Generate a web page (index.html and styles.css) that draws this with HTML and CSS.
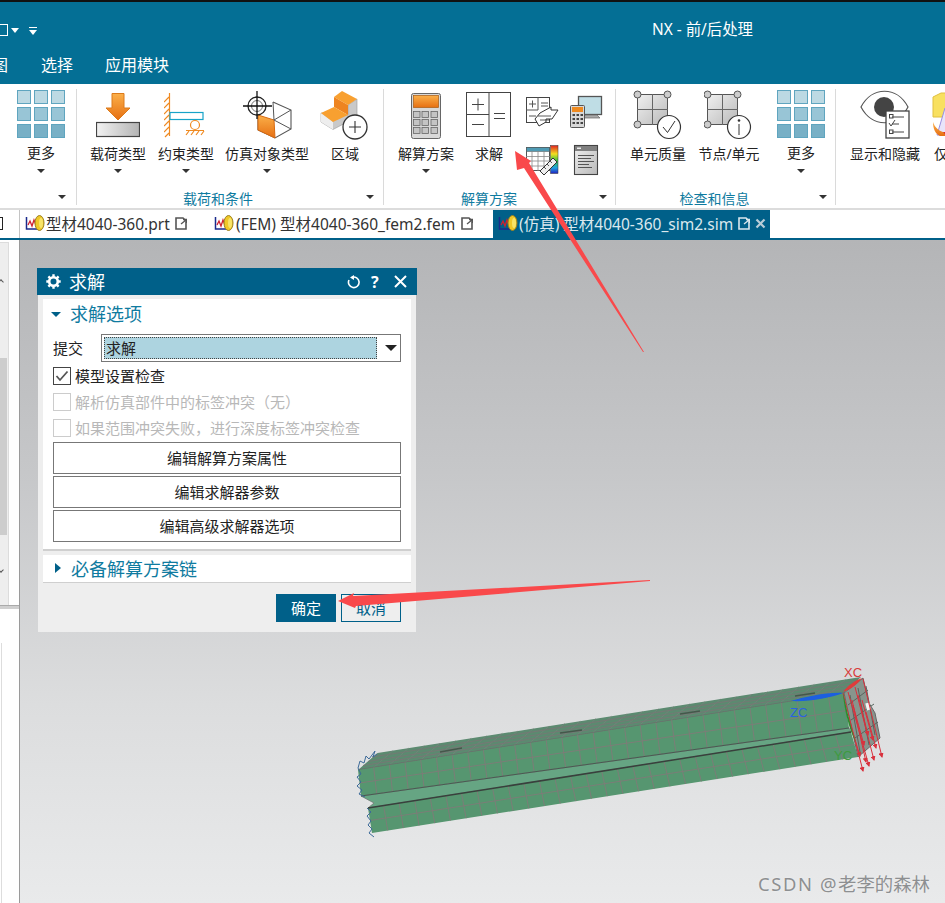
FILE: index.html
```html
<!DOCTYPE html>
<html lang="zh-CN">
<head>
<meta charset="utf-8">
<title>NX - 前/后处理</title>
<link rel="stylesheet" href="styles.css">
</head>
<body>
<svg class="defs" width="0" height="0">
  <defs>
    <linearGradient id="org" x1="0" y1="0" x2="0" y2="1"><stop offset="0" stop-color="#fbb04a"/><stop offset="1" stop-color="#e66f12"/></linearGradient>
    <linearGradient id="gry" x1="0" y1="0" x2="1" y2="0"><stop offset="0" stop-color="#f2f2f2"/><stop offset="1" stop-color="#b4b4b4"/></linearGradient>
    <linearGradient id="gry2" x1="0" y1="0" x2="1" y2="1"><stop offset="0" stop-color="#f0f0f0"/><stop offset="1" stop-color="#b9b9b9"/></linearGradient>
    <linearGradient id="rainbow" x1="0" y1="0" x2="0" y2="1"><stop offset="0" stop-color="#e02020"/><stop offset=".3" stop-color="#f4e020"/><stop offset=".55" stop-color="#30c040"/><stop offset=".8" stop-color="#20a0e0"/><stop offset="1" stop-color="#2020c0"/></linearGradient>
    <symbol id="i-more" viewBox="0 0 48 48">
      <g stroke="#5fa5bf" stroke-width="1">
        <g fill="#bcd9e3"><rect x=".5" y=".5" width="13" height="13"/><rect x="17.5" y=".5" width="13" height="13"/><rect x="34.5" y=".5" width="13" height="13"/></g>
        <g fill="#98c5d6"><rect x=".5" y="17.5" width="13" height="13"/><rect x="17.5" y="17.5" width="13" height="13"/><rect x="34.5" y="17.5" width="13" height="13"/></g>
        <g fill="#78b0c6"><rect x=".5" y="34.5" width="13" height="13"/><rect x="17.5" y="34.5" width="13" height="13"/><rect x="34.5" y="34.5" width="13" height="13"/></g>
      </g>
    </symbol>
    <symbol id="i-tab" viewBox="0 0 20 18">
      <path d="M1.500 3V15H13" fill="none" stroke="#1a2a8c" stroke-width="1.500"/>
      <path d="M3 11L5 7L7 12L9 6L11 11" fill="none" stroke="#d02030" stroke-width="1.300"/>
      <ellipse cx="14.500" cy="9" rx="4.500" ry="7.500" fill="#f0c828" stroke="#9a8020"/>
      <ellipse cx="16" cy="9" rx="2" ry="5" fill="#f8e468"/>
    </symbol>
    <symbol id="i-doc" viewBox="0 0 12 13">
      <path d="M1 1H8L11 4V12H1Z" fill="none" stroke="currentColor" stroke-width="1.600"/>
      <path d="M6 7L11 3M8 2.500H11.500V6" fill="none" stroke="currentColor" stroke-width="1.300"/>
    </symbol>
  </defs>
</svg>

<header class="titlebar">
  <div class="qat">
    <span class="qat-box"></span>
    <span class="qat-caret"></span>
    <span class="qat-more"></span>
  </div>
  <div class="apptitle">NX - 前/后处理</div>
</header>
<nav class="menubar">
  <span>图</span><span>选择</span><span>应用模块</span>
</nav>

<section class="ribbon">
  <div class="group g1">
    <div class="items">
      <div class="item w-more">
        <svg class="ic" width="48" height="48"><use href="#i-more"/></svg>
        <span class="lb up1">更多</span><i class="caret"></i>
      </div>
    </div>
    <i class="caret corner"></i>
  </div>

  <div class="group g2">
    <div class="items">
      <div class="item w68">
        <svg class="ic0" width="44" height="54" viewBox="96 88 44 54">
          <path d="M112 93.500H124V108H130L118 120L106 108H112Z" fill="url(#org)" stroke="#dc7a1a"/>
          <rect x="96.500" y="122.500" width="43" height="14" fill="url(#gry)" stroke="#444" stroke-width="1.200"/>
        </svg>
        <span class="lb">载荷类型</span><i class="caret"></i>
      </div>
      <div class="item w68">
        <svg class="ic0" width="44" height="54" viewBox="164 88 44 54">
          <path d="M169.500 93V136M169 97L164 102M169 103L164 108M169 109L164 114M169 115L164 120M169 121L164 126M169 127L164 132M169 133L165 137" fill="none" stroke="#ef8a22" stroke-width="1.200"/>
          <rect x="170" y="112.500" width="33" height="7" fill="#fff" stroke="#17a3c8" stroke-width="1.200"/>
          <circle cx="195" cy="125" r="4.500" fill="#fff" stroke="#ef8a22" stroke-width="1.200"/>
          <path d="M186 130.500H204M189 131L186 135M194 131L191 135M199 131L196 135M204 131L201 135" fill="none" stroke="#ef8a22" stroke-width="1.200"/>
        </svg>
        <span class="lb">约束类型</span><i class="caret"></i>
      </div>
      <div class="item w94">
        <svg class="ic0" width="52" height="54" viewBox="241 88 52 54">
          <path d="M273 102L291 110V129L275 138L258 130V115" fill="#fff" stroke="#555" stroke-width="1.100"/>
          <path d="M258 115L274 120L275 138L258 130Z" fill="url(#org)" stroke="#d86a10"/>
          <path d="M273 102L274 120L291 110M274 120L291 129" fill="none" stroke="#555"/>
          <circle cx="257" cy="106" r="9" fill="#fff" fill-opacity=".7" stroke="#222" stroke-width="1.300"/>
          <circle cx="257" cy="106" r="5.500" fill="none" stroke="#777"/>
          <path d="M243 106H272M257 91V119" stroke="#111" stroke-width="1.300"/>
        </svg>
        <span class="lb">仿真对象类型</span><i class="caret"></i>
      </div>
      <div class="item w62">
        <svg class="ic0" width="50" height="54" viewBox="320 88 50 54">
          <path d="M321 113V122L333 129.500L357 117V99L348 105V115Z" fill="#c9c9c9" stroke="#999" stroke-width=".6"/>
          <path d="M321 122L333 129.500V122L321 113Z" fill="#eee"/>
          <path d="M334 97L342 91L357 99L348 105Z" fill="#f8a030"/>
          <path d="M334 97L348 105V115L334 107Z" fill="#ee8420"/>
          <path d="M321 113L334 107L348 115L333 122Z" fill="#f8a030"/>
          <circle cx="355" cy="127" r="12" fill="#fff" stroke="#333" stroke-width="1.300"/>
          <path d="M349 127H361M355 121V133" stroke="#333" stroke-width="1.100"/>
        </svg>
        <span class="lb">区域</span>
      </div>
    </div>
    <span class="glabel">载荷和条件</span>
    <i class="caret corner"></i>
  </div>

  <div class="group g3">
    <div class="items">
      <div class="item w68">
        <svg class="ic0" width="32" height="54" viewBox="410 88 32 54">
          <rect x="411.500" y="93.500" width="29" height="45" rx="2" fill="#d8d8d8" stroke="#666"/>
          <rect x="413.500" y="95.500" width="25" height="12" fill="url(#org)" stroke="#a85a10" stroke-width=".7"/>
          <g fill="#c4c4c4" stroke="#666" stroke-width=".8">
            <rect x="413.500" y="111.500" width="6.500" height="6"/><rect x="422" y="111.500" width="6.500" height="6"/><rect x="431" y="111.500" width="6.500" height="6"/>
            <rect x="413.500" y="119.500" width="6.500" height="6"/><rect x="422" y="119.500" width="6.500" height="6"/><rect x="431" y="119.500" width="6.500" height="6"/>
            <rect x="413.500" y="127.500" width="6.500" height="6"/><rect x="422" y="127.500" width="6.500" height="6"/><rect x="431" y="127.500" width="6.500" height="6"/>
          </g>
        </svg>
        <span class="lb">解算方案</span><i class="caret"></i>
      </div>
      <div class="item w58">
        <svg class="ic0" width="46" height="54" viewBox="466 88 46 54">
          <rect x="466.500" y="92.500" width="44" height="44" fill="#fff" stroke="#444"/>
          <path d="M489 92V137M466 114.500H489M472 104.500H484M478 98.500V110.500M472 124.500H484M494 113.500H505M494 118.500H505" fill="none" stroke="#444"/>
        </svg>
        <span class="lb">求解</span>
      </div>
      <div class="smalls">
        <svg width="34" height="34" viewBox="525 95 34 34">
          <rect x="526.500" y="97.500" width="23" height="25" fill="#fff" stroke="#444"/>
          <path d="M538 97V110M526 110H538M529 104H536M532.500 100.500V107.500M529 116H536M541 103H548M541 106H548" fill="none" stroke="#555"/>
          <path d="M540 113L551 107V110L558 110L552 119H546V122L539 126L535 119Z" fill="#fff" stroke="#333"/>
          <path d="M538 116H551M540 120H550" fill="none" stroke="#333" stroke-width=".8"/>
        </svg>
        <svg width="34" height="34" viewBox="569 96 34 34">
          <rect x="578.500" y="97.500" width="23" height="18" fill="#bfdde5" stroke="#555" stroke-width="1.300"/>
          <path d="M585 116H597L600 119H583Z" fill="#aaa" stroke="#666" stroke-width=".7"/>
          <rect x="570.500" y="106.500" width="14" height="22" rx="1" fill="#d8d8d8" stroke="#555"/>
          <rect x="572" y="108" width="11" height="5" fill="#ee8a20"/>
          <path d="M572.500 116H575M576.500 116H579M580.500 116H583M572.500 120H575M576.500 120H579M580.500 120H583M572.500 124H575M576.500 124H579M580.500 124H583" stroke="#444" stroke-width="2"/>
        </svg>
        <svg width="34" height="34" viewBox="525 143 34 34">
          <rect x="526.500" y="147.500" width="23" height="23" fill="#fff" stroke="#555"/>
          <rect x="526.500" y="147.500" width="23" height="4" fill="#4f9bb4" stroke="#555" stroke-width=".5"/>
          <path d="M526 156.500H550M526 161H550M526 166H550M532 151V171M538 151V171M544 151V171" stroke="#888" stroke-width=".8"/>
          <rect x="550.500" y="145.500" width="7.500" height="28" fill="url(#rainbow)" stroke="#333" stroke-width=".5"/>
          <path d="M540 171L553 158L557 162L544 175Z" fill="#eee" stroke="#333"/>
          <path d="M544 167L546 169M547 164L549 166M550 161L552 163" stroke="#333" stroke-width=".8"/>
        </svg>
        <svg class="narrow" width="26" height="34" viewBox="573 144 26 34">
          <rect x="574.500" y="146.500" width="23" height="29" fill="url(#gry2)" stroke="#444" stroke-width="1.100"/>
          <rect x="575" y="147" width="22" height="5" fill="#808080"/>
          <rect x="577" y="148.500" width="4" height="1.500" fill="#eee"/>
          <path d="M578 156.500H594M578 159.500H591M578 162.500H594M578 165.500H589M578 168.500H592" stroke="#555"/>
        </svg>
      </div>
    </div>
    <span class="glabel">解算方案</span>
    <i class="caret corner"></i>
  </div>

  <div class="group g4">
    <div class="items">
      <div class="item w70">
        <svg class="ic0" width="50" height="54" viewBox="633 88 50 54">
          <rect x="637.500" y="94.500" width="30" height="30" fill="url(#gry2)" stroke="#555"/>
          <path d="M652.500 94V125M637 109.500H668" stroke="#666"/>
          <g fill="#ccc" stroke="#555"><circle cx="637.500" cy="94.500" r="3.500"/><circle cx="667.500" cy="94.500" r="3.500"/><circle cx="637.500" cy="124.500" r="3.500"/></g>
          <circle cx="669" cy="127" r="11.500" fill="#fff" stroke="#333" stroke-width="1.200"/>
          <path d="M663 127L667.500 132.500L675 121" fill="none" stroke="#333"/>
        </svg>
        <span class="lb">单元质量</span>
      </div>
      <div class="item w72">
        <svg class="ic0" width="50" height="54" viewBox="704 88 50 54">
          <rect x="707.500" y="94.500" width="30" height="30" fill="url(#gry2)" stroke="#555"/>
          <path d="M722.500 94V125M707 109.500H738" stroke="#666"/>
          <g fill="#ccc" stroke="#555"><circle cx="707.500" cy="94.500" r="3.500"/><circle cx="737.500" cy="94.500" r="3.500"/><circle cx="707.500" cy="124.500" r="3.500"/></g>
          <circle cx="739" cy="127" r="11.500" fill="#fff" stroke="#333" stroke-width="1.200"/>
          <path d="M739 124V135" stroke="#333"/><circle cx="739" cy="120.500" r="1.300" fill="#333"/>
        </svg>
        <span class="lb">节点/单元</span>
      </div>
      <div class="item w72">
        <svg class="ic" width="48" height="48"><use href="#i-more"/></svg>
        <span class="lb up1">更多</span><i class="caret"></i>
      </div>
    </div>
    <span class="glabel">检查和信息</span>
    <i class="caret corner"></i>
  </div>

  <div class="group g5">
    <div class="items">
      <div class="item w70">
        <svg class="ic0" width="50" height="54" viewBox="860 88 50 54">
          <path d="M861 107C872 86 897 86 908 107C897 128 872 128 861 107Z" fill="#fff" stroke="#555" stroke-width="1.200"/>
          <circle cx="884" cy="107" r="10" fill="#444"/>
          <rect x="886" y="111" width="23" height="27" fill="#fff" stroke="#444" stroke-width="1.300"/>
          <path d="M892 117H904M892 124H899M892 132H904" stroke="#444"/>
          <rect x="889.500" y="114.500" width="3.500" height="3.500" fill="none" stroke="#444"/>
          <rect x="889.500" y="130" width="3.500" height="3.500" fill="none" stroke="#444"/>
          <path d="M889 123L891 126L895 120" fill="none" stroke="#444"/>
        </svg>
        <span class="lb">显示和隐藏</span>
      </div>
      <div class="item w70">
        <svg class="ic0" width="50" height="54" viewBox="930 88 50 54">
          <path d="M933 97L941 93H958V117H933Z" fill="#f8e060" stroke="#e0c040"/>
          <path d="M945 108L958 135H937Z" fill="#e8e4fa" stroke="#9a8fe0"/>
          <path d="M933 122C936 132 948 136 958 130V136H940C935 134 933 128 933 122Z" fill="url(#org)"/>
          <path d="M943 132L950 140L952 132Z" fill="#e03020"/>
        </svg>
        <span class="lb">仅显示</span>
      </div>
    </div>
  </div>
</section>

<div class="tabbar">
  <div class="tabstub"><span class="stubbox"></span></div>
  <div class="tab t1">
    <svg width="20" height="18"><use href="#i-tab"/></svg>
    <span>型材4040-360.prt</span>
    <svg class="docic" width="12" height="13"><use href="#i-doc"/></svg>
  </div>
  <div class="tab t2">
    <svg width="20" height="18"><use href="#i-tab"/></svg>
    <span>(FEM) 型材4040-360_fem2.fem</span>
    <svg class="docic" width="12" height="13"><use href="#i-doc"/></svg>
  </div>
  <div class="tab t3">
    <svg width="20" height="18"><use href="#i-tab"/></svg>
    <span>(仿真) 型材4040-360_sim2.sim</span>
    <svg class="docic" width="12" height="13"><use href="#i-doc"/></svg>
    <svg class="tabx" width="11" height="11" viewBox="0 0 11 11"><path d="M1.500 1.500L9.500 9.500M9.500 1.500L1.500 9.500" stroke="#b9cdd8" stroke-width="2.200"/></svg>
  </div>
</div>

<main class="main">
  <aside class="side">
    <div class="side-top">
      <div class="track">
        <div class="track-a"><i class="chev"></i></div>
        <div class="thumb"></div>
        <div class="track-b"><i class="chev dn"></i></div>
      </div>
      <div class="side-gap"></div>
    </div>
    <div class="side-split"></div>
    <div class="side-bottom"><div class="side-box"></div></div>
  </aside>

  <div class="viewport">
    <svg class="model" width="550" height="190" viewBox="350 660 550 190">
      <defs>
        <marker id="tip" markerWidth="5" markerHeight="5" refX="4" refY="2.500" orient="auto">
          <path d="M0 0L5 2.500L0 5Z" fill="#d9303c"/>
        </marker>
        <filter id="soft" x="-5%" y="-5%" width="110%" height="110%"><feGaussianBlur stdDeviation=".3"/></filter>
      </defs>
      <g filter="url(#soft)">
        <path d="M377.500 753L861 677L844 693L358 770Z" fill="#5b8a70"/>
        <path d="M393.100 750.600l-19.600 17M408.700 748.100l-19.600 17M424.300 745.700l-19.600 17M439.900 743.200l-19.600 17M455.500 740.800l-19.600 17M471.100 738.300l-19.600 17M486.700 735.900l-19.600 17M502.300 733.400l-19.600 17M517.900 731l-19.600 17M533.500 728.500l-19.600 17M549.100 726.100l-19.600 17M564.700 723.600l-19.600 17M580.300 721.200l-19.600 17M595.900 718.700l-19.600 17M611.500 716.300l-19.600 17M627.100 713.800l-19.600 17M642.700 711.400l-19.600 17M658.300 708.900l-19.600 17M673.900 706.500l-19.600 17M689.500 704l-19.600 17M705.100 701.600l-19.600 17M720.700 699.100l-19.600 17M736.300 696.700l-19.600 17M751.900 694.200l-19.600 17M767.500 691.800l-19.600 17M783.100 689.300l-19.600 17M798.700 686.900l-19.600 17M814.300 684.400l-19.600 17M829.900 682l-19.600 17M845.500 679.500l-19.600 17" stroke="#7b807b" stroke-width=".7" fill="none"/>
        <path d="M368 761.500L852.500 685M372 757L857 681M363 765.500L848 689" stroke="#737a74" stroke-width="1.100" fill="none"/>
        <path d="M358 770L844 693" stroke="#6a706c" stroke-width="1.500"/>
        <path d="M440 752L462 748M560 733L582 730M680 714L700 711M795 696L815 693" stroke="#47564c" stroke-width="1.300"/>
        <path d="M358 770L844 693L849 728L361 796Z" fill="#56966f"/>
        <path class="mesh" d="M359.500 783L846.500 710.500M373.700 767.500L376.700 793.800M389.400 765L392.500 791.600M405 762.500L408.200 789.400M420.700 760.100L424 787.200M436.400 757.600L439.700 785M452.100 755.100L455.400 782.800M467.800 752.600L471.200 780.600M483.400 750.100L486.900 778.400M499.100 747.600L502.700 776.300M514.800 745.200L518.400 774.100M530.500 742.700L534.100 771.900M546.200 740.200L549.900 769.700M561.800 737.700L565.600 767.500M577.500 735.200L581.400 765.300M593.200 732.700L597.100 763.100M608.900 730.300L612.800 760.900M624.600 727.800L628.600 758.700M640.200 725.300L644.300 756.500M655.900 722.800L660.100 754.300M671.600 720.300L675.800 752.100M687.300 717.800L691.500 749.900M703 715.400L707.300 747.700M718.600 712.900L723 745.500M734.300 710.400L738.800 743.300M750 707.900L754.500 741.200M765.700 705.400L770.200 739M781.400 702.900L786 736.800M797 700.400L801.700 734.600M812.700 698L817.500 732.400M828.400 695.500L833.200 730.200"/>
        <path d="M361 796L849 728L851 732L368 808L374 803Z" fill="#66a583" stroke="#6d7a72" stroke-width=".8"/>
        <path d="M368 808L851 732L858 757L372 833Z" fill="#56966f"/>
        <path class="mesh" d="M370 820.500L854.500 744.500M383.600 805.500l4.100 25M399.200 803.100l4.200 25M414.700 800.600l4.300 25M430.300 798.200l4.400 25M445.900 795.700l4.500 25M461.500 793.300l4.600 25M477.100 790.800l4.700 25M492.600 788.400l4.800 25M508.200 785.900l4.900 25M523.800 783.500l5 25M539.400 781l5.100 25M555 778.600l5.200 25M570.500 776.100l5.300 25M586.100 773.700l5.400 25M601.700 771.200l5.500 25M617.300 768.800l5.600 25M632.900 766.300l5.700 25M648.400 763.900l5.800 25M664 761.400l5.900 25M679.600 759l6 25M695.200 756.500l6.100 25M710.800 754.100l6.200 25M726.300 751.600l6.300 25M741.900 749.200l6.400 25M757.500 746.700l6.500 25M773.100 744.200l6.600 25M788.700 741.800l6.700 25M804.200 739.300l6.800 25M819.800 736.900l6.900 25M835.400 734.400l7 25"/>
        <path d="M368 808L851 732" stroke="#39403c" stroke-width="1.500"/>
        <path d="M361 796L849 728" stroke="#4a5a52" stroke-width="1"/>
        <path d="M844 693L863 678L869 703L875 713L880 738L858 757Z" fill="#87958d" stroke="#666" stroke-width="1"/>
        <path d="M848 705L868 690M851 720L874 704M855 738L878 722M850 695L860 752M858 688L869 745M866 686L875 735" stroke="#59645e" stroke-width="1" fill="none"/>
        <rect x="866" y="703" width="4" height="7" fill="#f3f3f3" transform="rotate(-15 868 706)"/>
        <path d="M377 754L373 757L375 751L369 759L366 756L364 763L360 761L358 768L361 774L357 777L361 782L357 786L362 790L359 794L365 797M367 808L371 812L367 816L371 821L368 825L372 829L369 833L374 837" fill="none" stroke="#3c6a98" stroke-width="1"/>
        <g stroke="#d9303c" stroke-width="1">
          <line x1="843" y1="693" x2="863" y2="771" marker-end="url(#tip)"/>
          <line x1="848" y1="692" x2="869" y2="766" marker-end="url(#tip)"/>
          <line x1="855" y1="687" x2="874" y2="760" marker-end="url(#tip)"/>
          <line x1="863" y1="679" x2="882" y2="757" marker-end="url(#tip)"/>
          <line x1="848" y1="717" x2="860" y2="756" marker-end="url(#tip)"/>
          <line x1="852" y1="700" x2="866" y2="762" marker-end="url(#tip)"/>
          <line x1="858" y1="695" x2="868" y2="735" marker-end="url(#tip)"/>
          <line x1="853" y1="705" x2="864" y2="745" marker-end="url(#tip)"/>
          <line x1="862" y1="700" x2="873" y2="740" marker-end="url(#tip)"/>
          <line x1="866" y1="712" x2="876" y2="748" marker-end="url(#tip)"/>
        </g>
        <path d="M843 692C848 685 856 680 862 678C858 684 850 690 843 692Z" fill="#e03a3a"/>
        <path d="M843 693C828 692 805 697 791 701C808 702 830 698 843 693Z" fill="#1a5ee0"/>
        <path d="M843 693C846 705 852 733 856 742C851 735 844 710 843 693Z" fill="#2f8a2f"/>
      </g>
      <text class="axis ax-x" x="844" y="677">XC</text>
      <text class="axis ax-z" x="790" y="717">ZC</text>
      <text class="axis ax-y" x="834" y="760">YC</text>
    </svg>

    <div class="watermark"><span class="wm-latin">CSDN @</span>老李的森林</div>

    <section class="dlg">
      <div class="dlg-title">
        <svg class="gear" width="15" height="15" viewBox="0 0 15 15">
          <circle cx="7.500" cy="7.500" r="4.300" fill="none" stroke="#fff" stroke-width="2.600"/>
          <path d="M7.500 .3V3M7.500 12V14.700M.3 7.500H3M12 7.500H14.700M2.400 2.400L4.300 4.300M10.700 10.700L12.600 12.600M12.600 2.400L10.700 4.300M4.300 10.700L2.400 12.600" stroke="#fff" stroke-width="2.400"/>
        </svg>
        <span class="dlg-name">求解</span>
        <svg class="refresh" width="14" height="14" viewBox="0 0 14 14">
          <path d="M5 2.300A5.300 5.300 0 1 1 2 5" fill="none" stroke="#fff" stroke-width="1.600"/>
          <path d="M7 0V5L3 2.500Z" fill="#fff"/>
        </svg>
        <span class="help">?</span>
        <svg class="close" width="13" height="13" viewBox="0 0 13 13"><path d="M1 1L12 12M12 1L1 12" stroke="#fff" stroke-width="2"/></svg>
      </div>
      <div class="dlg-body">
        <div class="panel">
          <div class="phead"><i class="tri-down"></i><span>求解选项</span></div>
          <div class="selrow">
            <span class="sellabel">提交</span>
            <div class="select"><span class="selval">求解</span><i class="selcaret"></i></div>
          </div>
          <label class="chk on">
            <span class="box"><svg width="14" height="12" viewBox="0 0 14 12"><path d="M1.500 6L5 10L12.500 1.500" fill="none" stroke="#555" stroke-width="1.800"/></svg></span>
            <span class="chktext">模型设置检查</span>
          </label>
          <label class="chk off"><span class="box"></span><span class="chktext">解析仿真部件中的标签冲突（无）</span></label>
          <label class="chk off"><span class="box"></span><span class="chktext">如果范围冲突失败，进行深度标签冲突检查</span></label>
          <button class="wide first">编辑解算方案属性</button>
          <button class="wide">编辑求解器参数</button>
          <button class="wide">编辑高级求解器选项</button>
        </div>
        <div class="panel2"><i class="tri-right"></i><span>必备解算方案链</span></div>
        <div class="foot">
          <button class="ok">确定</button>
          <button class="cancel">取消</button>
        </div>
      </div>
    </section>
  </div>
</main>

<svg class="arrows" width="945" height="903" viewBox="0 0 945 903">
  <polygon points="515,151 531,161 529,163 644,352 643,352 524,168 517,170" fill="#f9494b"/>
  <polygon points="338,601 354,593 353,596 650,580 650,581 356,606 355,608" fill="#f9494b"/>
</svg>
</body>
</html>
```

FILE: styles.css
```css
* { box-sizing: border-box; }
html, body { margin: 0; padding: 0; }
body {
  position: relative;
  width: 945px;
  height: 903px;
  overflow: hidden;
  display: flex;
  flex-direction: column;
  background: #fff;
  color: #222;
  font-family: "Noto Sans", "Noto Sans CJK SC", sans-serif;
}
.defs { position: absolute; }

.titlebar {
  height: 42px;
  flex: none;
  border-top: 2px solid #111;
  background: #046f95;
  display: flex;
  color: #fff;
}
.qat { width: 652px; display: flex; align-items: center; padding-top: 16px; flex: none; }
.qat-box { width: 8px; height: 12px; border: 1.500px solid #fff; border-left: 0; margin-right: 3px; }
.qat-caret { width: 0; height: 0; border: 4px solid transparent; border-top: 5px solid #fff; border-bottom: 0; margin-right: 10px; }
.qat-more { width: 8px; height: 7px; border-top: 1.500px solid #fff; position: relative; }
.qat-more::after { content: ""; position: absolute; left: 0; top: 2px; border: 4px solid transparent; border-top: 5px solid #fff; border-bottom: 0; }
.apptitle { font-size: 15.400px; line-height: 56px; white-space: nowrap; }

.menubar {
  height: 42px;
  flex: none;
  background: #046f95;
  color: #fff;
  display: flex;
  gap: 32px;
  padding-left: 41px;
  font-size: 16px;
  line-height: 46px;
  overflow: hidden;
}
.menubar span:first-child { margin-left: -49px; margin-right: 1px; }

.ribbon {
  height: 126px;
  flex: none;
  display: flex;
  border-bottom: 2px solid #dcdcdc;
  background: #fff;
  overflow: hidden;
}
.group { position: relative; height: 124px; flex: none; padding-top: 4px; }
.group::after { content: ""; position: absolute; right: 0; top: 5px; bottom: 3px; width: 1px; background: #dadada; }
.g1 { width: 77px; }
.g2 { width: 307px; padding-left: 7px; }
.g3 { width: 232px; padding-left: 8px; }
.g4 { width: 220px; padding-left: 7px; }
.g5 { width: 110px; padding-left: 14px; }
.g5::after { display: none; }
.items { display: flex; height: 94px; }
.item { display: flex; flex-direction: column; align-items: center; flex: none; }
.w-more { width: 76px; padding-left: 6px; }
.w68 { width: 68px; }
.w94 { width: 94px; }
.w62 { width: 62px; }
.w58 { width: 58px; }
.w70 { width: 70px; }
.w72 { width: 72px; }
.ic { margin-top: 2px; margin-bottom: 4px; flex: none; }
.ic0 { flex: none; display: block; }
.lb { font-size: 14px; line-height: 20px; height: 20px; margin-top: 2px; white-space: nowrap; }
.lb.up1 { margin-top: 1px; }
.caret { display: block; width: 0; height: 0; border: 4px solid transparent; border-top: 4px solid #333; border-bottom: 0; margin-top: 5px; flex: none; }
.lb.up1 + .caret { margin-top: 6px; }
.corner { position: absolute; right: 9px; top: 111px; margin: 0; }
.g1 .corner { right: 11px; }
.g2 .corner { right: 10px; }
.glabel { display: block; text-align: center; font-size: 14px; line-height: 20px; color: #0f7ba0; height: 20px; margin-top: 7px; }
.g2 .glabel { margin-left: -32px; }
.g3 .glabel { margin-left: -30px; }
.g4 .glabel { margin-left: -30px; }
.smalls { display: grid; grid-template-columns: 34px 34px; column-gap: 10px; row-gap: 14px; padding: 7px 0 0 7px; align-content: start; }
.smalls svg { display: block; }
.smalls .narrow { justify-self: center; }

.tabbar {
  height: 30px;
  flex: none;
  display: flex;
  border-bottom: 2px solid #006089;
  font-size: 15.500px;
  background: #fff;
  color: #333;
}
.tabstub { width: 20px; flex: none; border-right: 1px solid #c4c4c4; height: 28px; overflow: hidden; position: relative; }
.stubbox { position: absolute; left: -7px; top: 7px; width: 10px; height: 13px; border: 1.500px solid #222; }
.tab { display: flex; align-items: center; height: 28px; padding-bottom: 2px; white-space: nowrap; flex: none; }
.tab svg { flex: none; }
.t1 { width: 194px; padding-left: 5px; gap: 1px; }
.t2 { width: 279px; padding-left: 0; gap: 2px; }
.t3 { width: 277px; padding-left: 5px; gap: 1px; background: #006089; color: #dbe8ee; }
.docic { margin-left: 4px; color: #555; }
.t3 .docic { color: #dbe8ee; }
.tabx { margin-left: 4px; }

.main { flex: 1; display: flex; min-height: 0; }
.side { width: 20px; flex: none; border-right: 1px solid #9a9a9a; background: #fff; display: flex; flex-direction: column; }
.side-top { height: 365px; display: flex; flex: none; padding-top: 2px; }
.track { width: 9px; display: flex; flex-direction: column; background: #eee; border-top: 1px solid #dcdcdc; border-right: 1px solid #dcdcdc; }
.track-a { height: 115px; padding-top: 37px; }
.thumb { height: 177px; background: #cdcdcd; margin-right: 1px; }
.track-b { flex: 1; padding-top: 33px; }
.chev { display: block; width: 4px; height: 4px; margin-left: -1px; border-top: 1px solid #555; border-right: 1px solid #555; transform: rotate(-45deg); }
.chev.dn { transform: rotate(135deg); }
.side-gap { flex: 1; }
.side-split { height: 4px; background: #cfcfcf; border-top: 1px solid #aaa; flex: none; }
.side-bottom { flex: 1; padding-top: 34px; }
.side-box { height: 100%; margin-left: 1px; border-left: 1px solid #ddd; border-top: 1px solid #ddd; width: 1px; }

.viewport {
  position: relative;
  flex: 1;
  background: linear-gradient(180deg, #b4b5b7 0%, #c6c7c9 35%, #dcddde 70%, #e9eaeb 100%);
}
.model { position: absolute; left: 330px; top: 420px; }
.mesh { fill: none; stroke: #7f7a78; stroke-width: .9; }
.axis { font-size: 13px; font-family: "Liberation Sans", sans-serif; }
.ax-x { fill: #d83a3a; }
.ax-z { fill: #2a62e0; }
.ax-y { fill: #3f9a3f; }
.watermark {
  position: absolute;
  right: 15px;
  bottom: 7px;
  font-size: 18.400px;
  line-height: 24px;
  color: #8d8f91;
  text-shadow: 0 0 2px #f4f4f4;
  white-space: nowrap;
}
.wm-latin { letter-spacing: 1.600px; }

.dlg {
  position: absolute;
  left: 17px;
  top: 28px;
  width: 380px;
  height: 364px;
  display: flex;
  flex-direction: column;
}
.dlg-title {
  height: 27px;
  flex: none;
  background: #006089;
  color: #fff;
  display: flex;
  align-items: center;
  padding-left: 9px;
}
.gear { margin-right: 9px; flex: none; }
.dlg-name { font-size: 18px; flex: 1; line-height: 24px; margin-left: -1px; }
.refresh { margin-right: 10px; }
.help { font-size: 16px; font-weight: 700; width: 11px; margin-right: 12px; line-height: 20px; }
.close { margin-right: 10px; }
.dlg-body { flex: 1; background: #eeeeee; margin: 0 1px; padding: 4px 5px 0; display: flex; flex-direction: column; }
.panel { height: 252px; background: #fff; border-bottom: 2px solid #cfcfcf; padding: 0 10px; flex: none; }
.phead { height: 30px; padding-bottom: 2px; display: flex; align-items: center; margin-left: -10px; color: #0f7ba0; font-size: 18px; }
.tri-down { width: 0; height: 0; border: 5px solid transparent; border-top: 5px solid #006089; border-bottom: 0; margin: 2px 9px 0 8px; border-left-width: 5.500px; border-right-width: 5.500px; }
.selrow { display: flex; margin-top: 5px; height: 28px; font-size: 15px; }
.sellabel { width: 48px; line-height: 28px; }
.select { flex: 1; border: 1px solid #777; padding: 2px; display: flex; align-items: stretch; }
.selval { width: 273px; background: #add4e0; outline: 1px dotted #444; outline-offset: -1px; line-height: 22px; padding-left: 2px; }
.selcaret { width: 0; height: 0; border: 6px solid transparent; border-top: 6px solid #222; border-bottom: 0; margin: 8px 0 0 8px; }
.chk { display: flex; align-items: center; height: 18px; font-size: 15px; gap: 4px; margin-top: 8px; white-space: nowrap; }
.chk.on { margin-top: 5px; }
.chktext { padding-bottom: 2px; }
.box { width: 18px; height: 18px; border: 1px solid #ccc; background: #fff; flex: none; display: flex; align-items: center; justify-content: center; }
.on .box { border: 1.500px solid #444; }
.off { color: #b8b8b8; }
.wide {
  display: block;
  width: 100%;
  height: 32px;
  margin-top: 2px;
  background: #fff;
  border: 1px solid #777;
  font: inherit;
  font-size: 15px;
  color: #222;
  padding: 0 0 2px;
}
.wide.first { margin-top: 5px; }
.panel2 { height: 28px; margin-top: 4px; padding-bottom: 2px; background: #fff; border-bottom: 1px solid #cfcfcf; display: flex; align-items: center; color: #0f7ba0; font-size: 18px; flex: none; }
.tri-right { width: 0; height: 0; border: 5.500px solid transparent; border-left: 6px solid #006089; border-right: 0; margin: 0 10px 0 12px; }
.foot { display: flex; justify-content: flex-end; gap: 5px; padding: 11px 10px 0 0; }
.ok, .cancel { width: 60px; height: 28px; font: inherit; font-size: 15px; padding: 0 0 2px; }
.ok { background: #006089; border: 0; color: #fff; }
.cancel { background: #eee; border: 1px solid #006089; color: #006089; }

.arrows { position: absolute; left: 0; top: 0; pointer-events: none; }
```
